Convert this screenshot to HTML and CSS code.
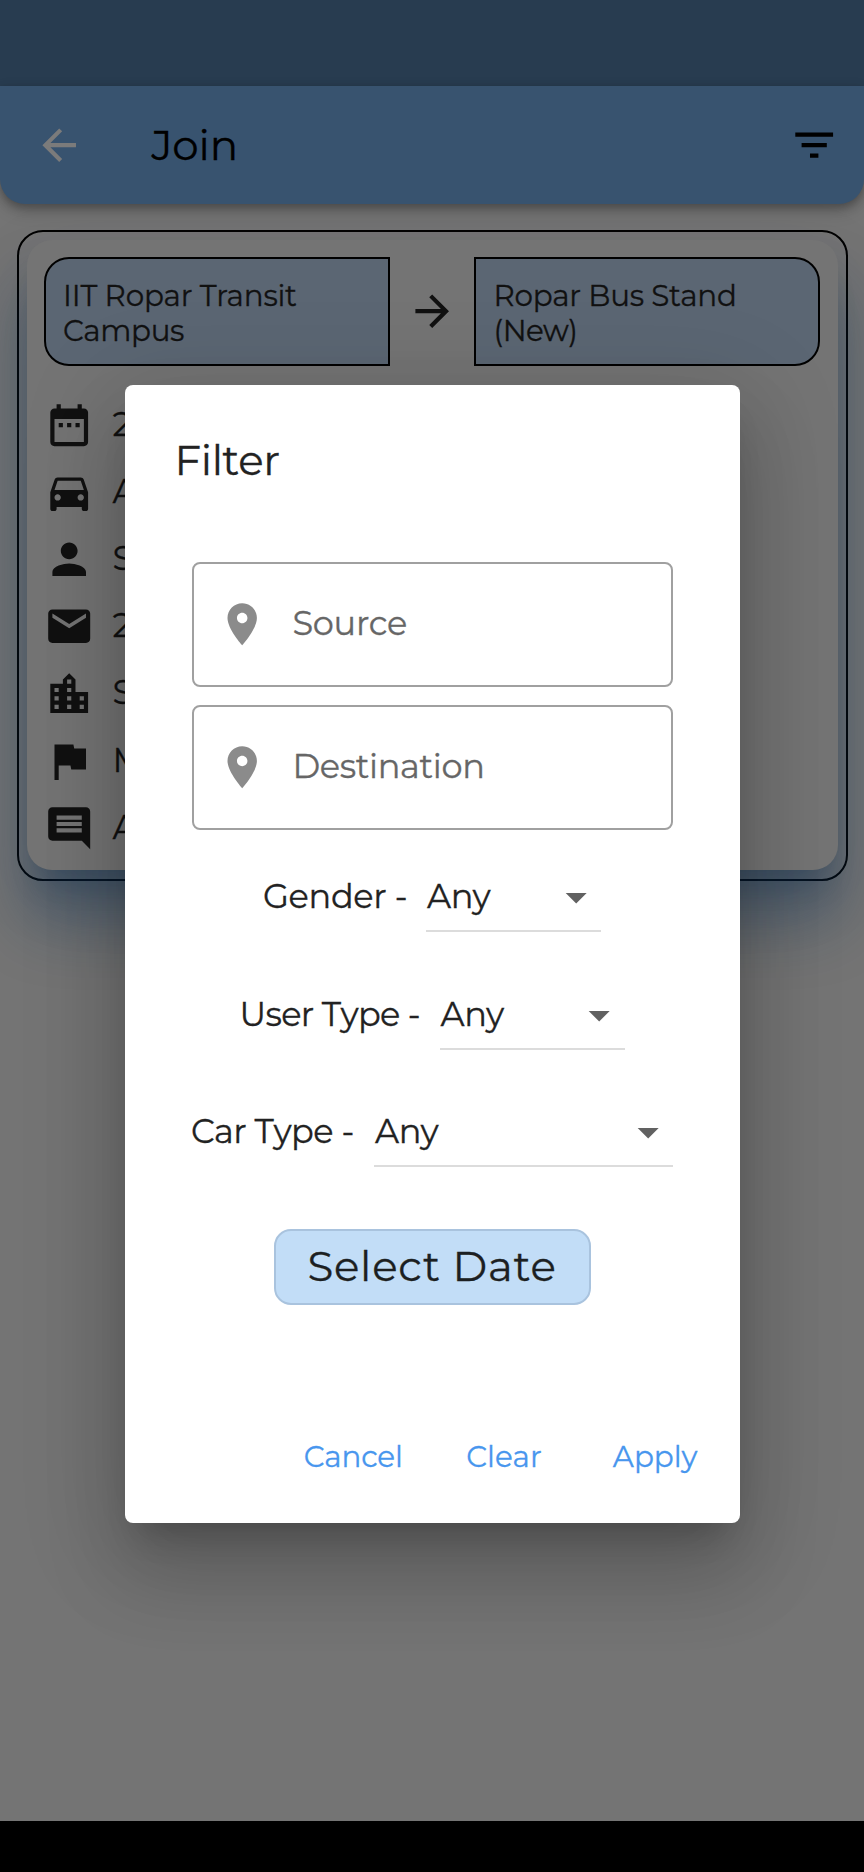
FILE: index.html
```html
<!DOCTYPE html>
<html lang="en">
<head>
<meta charset="utf-8">
<title>Join</title>
<link rel="stylesheet" href="styles.css">
</head>
<body>
<div class="screen">
  <div class="status-bar"></div>
  <header class="app-bar">
    <svg class="icon back" viewBox="0 0 24 24"><path d="M20 11H7.83l5.59-5.59L12 4l-8 8 8 8 1.41-1.41L7.83 13H20v-2z"/></svg>
    <h1 class="title">Join</h1>
    <svg class="icon filter" viewBox="0 0 24 24"><path d="M10 18h4v-2h-4v2zM3 6v2h18V6H3zm3 7h12v-2H6v2z"/></svg>
  </header>
  <main class="content">
    <section class="trip">
      <div class="trip-body">
        <div class="route">
          <div class="stop from"><span class="ls-iit">IIT Ropar Transit</span><span class="ls-campus">Campus</span></div>
          <svg class="icon" viewBox="0 0 24 24"><path d="M12 4l-1.41 1.41L16.17 11H4v2h12.17l-5.58 5.59L12 20l8-8z"/></svg>
          <div class="stop to"><span class="ls-bus">Ropar Bus Stand</span><span class="ls-new">(New)</span></div>
        </div>
        <ul class="details">
          <li><svg class="icon" viewBox="0 0 24 24"><path d="M9 11H7v2h2v-2zm4 0h-2v2h2v-2zm4 0h-2v2h2v-2zm2-7h-1V2h-2v2H8V2H6v2H5c-1.11 0-1.99.9-1.99 2L3 20c0 1.1.89 2 2 2h14c1.1 0 2-.9 2-2V6c0-1.1-.9-2-2-2zm0 16H5V9h14v11z"/></svg><span>2</span></li>
          <li><svg class="icon" viewBox="0 0 24 24"><path d="M18.92 6.01C18.72 5.42 18.16 5 17.5 5h-11c-.66 0-1.21.42-1.42 1.01L3 12v8c0 .55.45 1 1 1h1c.55 0 1-.45 1-1v-1h12v1c0 .55.45 1 1 1h1c.55 0 1-.45 1-1v-8l-2.08-5.99zM6.5 16c-.83 0-1.5-.67-1.5-1.5S5.67 13 6.5 13s1.5.67 1.5 1.5S7.33 16 6.5 16zm11 0c-.83 0-1.5-.67-1.5-1.5s.67-1.5 1.5-1.5 1.5.67 1.5 1.5-.67 1.5-1.5 1.5zM5 11l1.5-4.5h11L19 11H5z"/></svg><span>A</span></li>
          <li><svg class="icon" viewBox="0 0 24 24"><path d="M12 12c2.21 0 4-1.79 4-4s-1.79-4-4-4-4 1.79-4 4 1.79 4 4 4zm0 2c-2.67 0-8 1.34-8 4v2h16v-2c0-2.66-5.33-4-8-4z"/></svg><span>S</span></li>
          <li><svg class="icon" viewBox="0 0 24 24"><path d="M20 4H4c-1.1 0-1.99.9-1.99 2L2 18c0 1.1.9 2 2 2h16c1.1 0 2-.9 2-2V6c0-1.1-.9-2-2-2zm0 4l-8 5-8-5V6l8 5 8-5v2z"/></svg><span>2</span></li>
          <li><svg class="icon" viewBox="0 0 24 24"><path d="M15 11V5l-3-3-3 3v2H3v14h18V11h-6zm-8 8H5v-2h2v2zm0-4H5v-2h2v2zm0-4H5V9h2v2zm6 8h-2v-2h2v2zm0-4h-2v-2h2v2zm0-4h-2V9h2v2zm0-4h-2V5h2v2zm6 12h-2v-2h2v2zm0-4h-2v-2h2v2z"/></svg><span>S</span></li>
          <li><svg class="icon" viewBox="0 0 24 24"><path d="M14.4 6L14 4H5v17h2v-7h5.6l.4 2h7V6z"/></svg><span>M</span></li>
          <li><svg class="icon" viewBox="0 0 24 24"><path d="M21.99 4c0-1.1-.89-2-1.99-2H4c-1.1 0-2 .9-2 2v12c0 1.1.9 2 2 2h14l4 4-.01-18zM18 14H6v-2h12v2zm0-3H6V9h12v2zm0-3H6V6h12v2z"/></svg><span>A</span></li>
        </ul>
      </div>
    </section>
  </main>
  <div class="nav-bar"></div>

  <div class="dialog">
    <h2 class="dialog-title">Filter</h2>
    <div class="fields">
      <div class="field"><svg class="icon" viewBox="0 0 24 24"><path d="M12 2C8.13 2 5 5.13 5 9c0 5.25 7 13 7 13s7-7.75 7-13c0-3.87-3.13-7-7-7zm0 9.5c-1.38 0-2.5-1.12-2.5-2.5s1.12-2.5 2.5-2.5 2.5 1.12 2.5 2.5-1.12 2.5-2.5 2.5z"/></svg><span class="ls-source">Source</span></div>
      <div class="field"><svg class="icon" viewBox="0 0 24 24"><path d="M12 2C8.13 2 5 5.13 5 9c0 5.25 7 13 7 13s7-7.75 7-13c0-3.87-3.13-7-7-7zm0 9.5c-1.38 0-2.5-1.12-2.5-2.5s1.12-2.5 2.5-2.5 2.5 1.12 2.5 2.5-1.12 2.5-2.5 2.5z"/></svg><span class="ls-dest">Destination</span></div>
    </div>
    <div class="choices">
      <div class="choice gender"><label>Gender -</label><div class="select"><span>Any</span><svg class="icon" viewBox="0 0 24 24"><path d="M7 10l5 5 5-5z"/></svg></div></div>
      <div class="choice user"><label>User Type -</label><div class="select"><span>Any</span><svg class="icon" viewBox="0 0 24 24"><path d="M7 10l5 5 5-5z"/></svg></div></div>
      <div class="choice car"><label>Car Type -</label><div class="select"><span>Any</span><svg class="icon" viewBox="0 0 24 24"><path d="M7 10l5 5 5-5z"/></svg></div></div>
    </div>
    <div class="date-button">Select Date</div>
    <div class="actions"><span class="cancel">Cancel</span><span class="clear">Clear</span><span class="apply">Apply</span></div>
  </div>
</div>
</body>
</html>
```
FILE: styles.css
```css
* { box-sizing: border-box; }
body { margin: 0; font-family: Montserrat, Inter, sans-serif; color: #111; -webkit-text-stroke: .3px currentColor; }
h1, h2, ul { margin: 0; padding: 0; font-weight: 400; list-style: none; }
.screen { position: relative; width: 864px; height: 1872px; overflow: hidden; display: flex; flex-direction: column; background: #747474; }
.icon { display: block; flex: none; width: 50.4px; height: 50.4px; fill: currentColor; -webkit-text-stroke: 0; }

.status-bar { height: 86px; flex: none; background: #283c50; }
.app-bar { position: relative; z-index: 1; flex: none; height: 118px; display: flex; align-items: center; padding: 0 25px 0 34px; color: #000; background: #38536f; border-radius: 0 0 25px 25px; box-shadow: 0 4px 10px rgba(0,0,0,.28), 0 7px 18px rgba(0,0,0,.14); }
.back { color: #7b7b7b; }
.title { flex: 1; margin-left: 67px; font-size: 42px; line-height: 50px; letter-spacing: -.1px; }

.content { flex: 1; padding: 25.5px 16.5px 0 17px; }
.trip { height: 651px; border: 2px solid #000; border-radius: 26px; padding: 8px; }
.trip-body { height: 630px; padding: 17px; border-radius: 25px; background: #747474; box-shadow: 0 24px 30px -13px rgba(0,30,65,.22), 0 50px 62px 2px rgba(20,55,90,.42), 0 20px 80px 6px rgba(20,55,90,.06); }
.route { display: flex; align-items: center; justify-content: space-between; }
.stop { width: 346px; height: 109px; padding: 19px 17px 0; border: 2px solid #000; background: #5b6673; font-size: 29.4px; line-height: 35px; }
.stop span { display: block; white-space: nowrap; }
.from { border-radius: 25px 0 0 25px; }
.to { border-radius: 0 25px 25px 0; padding-left: 17px; }
.details { padding-top: 26px; }
.details li { display: flex; align-items: center; height: 67.2px; gap: 18px; font-size: 33.6px; }
.details span { padding-bottom: 4px; }

.nav-bar { height: 51px; flex: none; background: #000; }

.dialog { position: absolute; z-index: 2; left: 124.5px; top: 385px; width: 615px; height: 1138px; display: flex; flex-direction: column; background: #fff; border-radius: 8px; color: #222; box-shadow: 0 23px 32px -15px rgba(0,0,0,.2), 0 50px 80px 6px rgba(0,0,0,.14), 0 19px 97px 17px rgba(0,0,0,.12); }
.dialog-title { padding: 50px 0 1px 50px; font-size: 42px; line-height: 50px; letter-spacing: -.35px; }
.fields { display: flex; flex-direction: column; gap: 18px; padding: 76px 67px 0; }
.field { display: flex; align-items: center; gap: 25.5px; height: 125px; padding: 0 0 1px 23px; border: 2px solid #a0a0a0; border-radius: 8px; color: #8b8b8b; font-size: 33.6px; }
.field span { color: #666; padding-bottom: 3px; }
.choices { display: flex; flex-direction: column; align-items: center; padding-top: 32px; font-size: 33.6px; }
.choice { display: flex; justify-content: space-between; height: 117.5px; line-height: 68px; white-space: nowrap; }
.select { display: flex; justify-content: space-between; height: 70px; padding-left: 1px; border-bottom: 2px solid #dcdcdc; letter-spacing: -.3px; }
.select .icon { margin-top: 10px; color: #616161; }
.gender { width: 338px; letter-spacing: -.35px; }
.gender .select { width: 175px; }
.user { width: 385px; letter-spacing: -.65px; }
.user .select { width: 185px; }
.car { width: 482px; letter-spacing: -.5px; }
.car .select { width: 299px; }
.date-button { align-self: center; width: 317px; height: 76px; margin-top: 14px; border: 2px solid #a9c3de; border-radius: 17px; background: #c2ddf7; color: #1c1f22; text-align: center; font-size: 42px; line-height: 71px; letter-spacing: .75px; }
.actions { display: flex; justify-content: flex-end; margin-top: 132px; padding-right: 42px; color: #4896ee; font-size: 29.4px; line-height: 40px; }

.ls-iit { letter-spacing: -.18px; }
.ls-campus { letter-spacing: -.35px; }
.ls-bus { letter-spacing: -.25px; }
.ls-new { letter-spacing: -.5px; }
.ls-source { letter-spacing: -.25px; }
.ls-dest { letter-spacing: -.35px; }
.cancel { letter-spacing: -.15px; }
.clear { margin-left: 63.5px; letter-spacing: .1px; }
.apply { margin-left: 71px; letter-spacing: 0; }
```
